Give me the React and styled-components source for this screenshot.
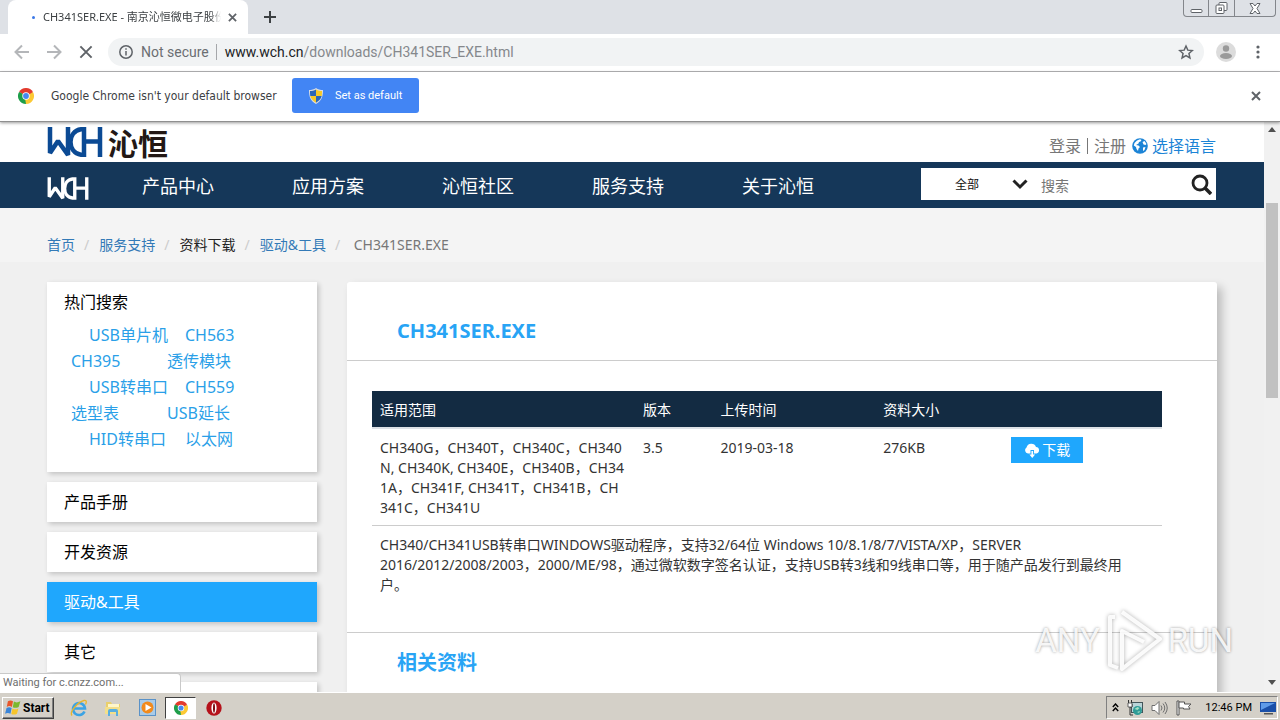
import React from "react";
import styled, { createGlobalStyle } from "styled-components";

const uiFont = `Roboto, "Noto Sans CJK SC", sans-serif`;
const pageFont = `"Noto Sans", "Noto Sans CJK SC", sans-serif`;

const GlobalStyle = createGlobalStyle`
  *, *::before, *::after { box-sizing: border-box; }
  body { margin: 0; font-family: ${pageFont}; color: #333; }
  button, input, select { font-family: inherit; margin: 0; padding: 0; border: 0; background: none; border-radius: 0; outline: none; }
  a { color: inherit; text-decoration: none; }
  h1, h2, p, ul, ol { margin: 0; padding: 0; list-style: none; }
  svg { display: block; flex: none; }
`;

/* ---------- Browser frame ---------- */

const Desktop = styled.div`
  display: flex;
  flex-direction: column;
  height: 100vh;
  overflow: hidden;
`;

const TabStrip = styled.div`
  display: flex;
  align-items: flex-start;
  height: 34px;
  flex: none;
  padding: 0 4px 0 8px;
  background: #dee1e6;
  font-family: ${pageFont};
`;

const Tab = styled.div`
  display: flex;
  align-items: center;
  width: 240px;
  height: 34px;
  padding: 0 5px 0 24px;
  background: #fff;
  border-radius: 8px 8px 0 0;
`;

const Spinner = styled.span`
  width: 3px;
  height: 3px;
  margin-right: 8px;
  border-radius: 50%;
  background: #3b78e7;
`;

const TabTitle = styled.span`
  flex: 1;
  overflow: hidden;
  white-space: nowrap;
  font-size: 11px;
  line-height: 18px;
  color: #3c4043;
  mask-image: linear-gradient(90deg, #000 94%, transparent);
`;

const IconButton = styled.button`
  display: flex;
  align-items: center;
  justify-content: center;
  flex: none;
  width: ${(p) => p.$w || 32}px;
  height: ${(p) => p.$h || 32}px;
  color: ${(p) => p.$color || "#5f6368"};
`;

const WindowControls = styled.div`
  display: flex;
  margin-left: auto;
  height: 17px;
  border: 1px solid #83868b;
  border-top: 0;
  border-radius: 0 0 4px 4px;
  & > button + button { border-left: 1px solid #83868b; }
`;

const Toolbar = styled.div`
  display: flex;
  align-items: center;
  flex: none;
  height: 38px;
  padding: 0 6px 2px;
  background: #fff;
  border-bottom: 1px solid #b6b6b8;
  font-family: ${uiFont};
`;

const Omnibox = styled.div`
  display: flex;
  align-items: center;
  flex: 1;
  height: 28px;
  margin: 0 6px;
  padding: 0 6px 0 11px;
  border-radius: 14px;
  background: #f1f3f4;
  font-size: 14px;
  line-height: 20px;
  color: #6b6e72;
`;

const Security = styled.span`
  margin: 0 8px;
  padding-right: 7px;
  border-right: 1px solid #a5a7aa;
  line-height: 16px;
  white-space: nowrap;
`;

const Url = styled.span`
  flex: 1;
  white-space: nowrap;
  color: #85888c;
  b { font-weight: 400; color: #202124; }
`;

const InfoBar = styled.div`
  position: relative;
  z-index: 2;
  display: flex;
  align-items: center;
  flex: none;
  height: 50px;
  padding: 0 8px 2px 18px;
  background: #fff;
  border-bottom: 1px solid #8f8f8f;
  box-shadow: 0 1px 3px rgba(0, 0, 0, 0.4);
  font-family: ${uiFont};
  font-size: 12px;
  color: #3c4043;
  & > :last-child { margin-left: auto; }
`;

const InfoText = styled.span`
  min-width: 228px;
  margin: 0 13px 0 17px;
  font-family: "DejaVu Sans Condensed", "Noto Sans", sans-serif;
  font-size: 12px;
  white-space: nowrap;
`;

const DefaultButton = styled.button`
  display: flex;
  align-items: center;
  gap: 12px;
  height: 35px;
  width: 127px;
  padding-left: 17px;
  border-radius: 3px;
  background: #4285f4;
  color: #fff;
  font-size: 11px;
  white-space: nowrap;
`;

const Viewport = styled.div`
  position: relative;
  display: flex;
  flex: 1;
  min-height: 0;
  overflow: hidden;
`;

const Page = styled.div`
  flex: 1;
  min-width: 0;
  overflow: hidden;
  background: #f0f0f0;
`;

const ScrollTrack = styled.div`
  display: flex;
  flex-direction: column;
  align-items: center;
  flex: none;
  width: 16px;
  padding: 5px 0 7px;
  background: #f1f1f1;
  color: #505050;
`;

const Thumb = styled.div`
  width: 12px;
  height: 35%;
  margin: 71px 0 auto;
  background: #c1c1c1;
`;

const StatusBubble = styled.div`
  position: absolute;
  left: 0;
  bottom: 0;
  width: 181px;
  height: 19px;
  padding-left: 3px;
  border: 1px solid #c9c9c9;
  border-left: 0;
  border-bottom: 0;
  border-radius: 0 4px 0 0;
  background: #fff;
  font-family: ${uiFont};
  font-size: 11px;
  line-height: 18px;
  color: #6e6e6e;
`;

/* ---------- Site header ---------- */

const TopBar = styled.div`
  display: flex;
  align-items: center;
  justify-content: space-between;
  height: 40px;
  padding: 0 48px 0 47px;
  background: #fff;
`;

const Brand = styled.a`
  display: flex;
  align-items: center;
  gap: 5px;
  color: #231815;
  font-family: "Noto Sans CJK SC", sans-serif;
  font-size: 30px;
  font-weight: 700;
  line-height: 40px;
`;

const Account = styled.div`
  display: flex;
  align-items: center;
  gap: 6px;
  padding-top: 8px;
  font-size: 16px;
  line-height: 24px;
  color: #777;
`;

const Divider = styled.span`
  width: 1px;
  height: 16px;
  background: #777;
`;

const LanguageLink = styled.a`
  display: flex;
  align-items: center;
  gap: 4px;
  color: #1c84d6;
`;

const NavBar = styled.nav`
  display: flex;
  align-items: center;
  height: 46px;
  padding: 0 48px 2px 47px;
  background: #153759;
`;

const HomeLink = styled.a`
  padding-top: 8px;
`;

const NavList = styled.ul`
  display: flex;
  padding-top: 4px;
  margin-left: 53px;
`;

const NavItem = styled.li`
  width: 150px;
  font-size: 18px;
  line-height: 28px;
  color: #fff;
`;

const SearchForm = styled.form`
  display: flex;
  align-items: center;
  width: 295px;
  height: 32px;
  margin-left: auto;
  padding-right: 4px;
  background: #fff;
`;

const SearchScope = styled.div`
  position: relative;
  select {
    width: 112px;
    height: 32px;
    padding-left: 34px;
    appearance: none;
    font-size: 12px;
    color: #111;
  }
  svg { position: absolute; right: 5px; top: 11px; pointer-events: none; }
`;

const SearchInput = styled.input`
  flex: 1;
  min-width: 0;
  height: 32px;
  padding: 2px 0 0 8px;
  font-size: 14px;
  color: #333;
  &::placeholder { color: #757575; opacity: 1; }
`;

const Crumbs = styled.ol`
  display: flex;
  height: 54px;
  padding: 27px 47px 0;
  background: #f4f4f4;
  font-size: 14px;
  line-height: 20px;
`;

const Crumb = styled.li`
  color: ${(p) => p.$color || "#337ab7"};
  &:not(:first-child)::before { content: "/"; padding: 0 10px 0 9px; color: #ccc; }
`;

/* ---------- Page body ---------- */

const Columns = styled.div`
  display: flex;
  align-items: flex-start;
  gap: 30px;
  padding: 20px 47px 0;
`;

const Sidebar = styled.aside`
  display: flex;
  flex-direction: column;
  gap: 10px;
  flex: none;
  width: 270px;
`;

const SideLink = styled.a`
  display: block;
  height: 40px;
  padding-left: 17px;
  background: ${(p) => (p.$active ? "#1fa7fd" : "#fff")};
  color: ${(p) => (p.$active ? "#fff" : "#000")};
  box-shadow: 2px 2px 5px rgba(0, 0, 0, 0.2);
  font-size: 16px;
  line-height: 40px;
`;

const HotCard = styled.section`
  height: 190px;
  background: #fff;
  box-shadow: 2px 2px 5px rgba(0, 0, 0, 0.2);
  font-size: 16px;
  h2 { padding-left: 17px; font-size: 16px; font-weight: 400; line-height: 40px; color: #000; }
`;

const HotRow = styled.div`
  display: grid;
  grid-template-columns: 96px 96px;
  padding-left: ${(p) => (p.$indent ? 42 : 24)}px;
  line-height: 26px;
  color: #2a9fe8;
  white-space: nowrap;
`;

const Card = styled.main`
  flex: 1;
  min-width: 0;
  height: 640px;
  border-radius: 3px;
  background: #fff;
  box-shadow: 5px 5px 10px rgba(0, 0, 0, 0.22);
`;

const CardTitle = styled.h1`
  padding: 34px 50px 15px;
  font-size: 20px;
  font-weight: 700;
  line-height: 29px;
  color: #28a4f5;
  border-bottom: 1px solid #ccc;
`;

const SectionTitle = styled.h2`
  margin-top: 30px;
  padding: 15px 50px;
  border-top: 1px solid #ccc;
  font-size: 20px;
  font-weight: 700;
  line-height: 29px;
  color: #28a4f5;
`;

const TableWrap = styled.div`
  padding: 30px 55px 0 25px;
`;

const DataTable = styled.table`
  width: 100%;
  table-layout: fixed;
  border-collapse: separate;
  border-spacing: 0;
  font-size: 14px;
  line-height: 20px;
  th { height: 38px; padding: 2px 8px 0; text-align: left; font-weight: 400; color: #fff; background: #132b42; border-bottom: 2px solid #dde1e6; }
  td { padding: 9px 8px 7px; vertical-align: top; white-space: nowrap; color: #333; }
  td:has(button) { padding-top: 8px; }
  tbody tr:first-child td { border-bottom: 1px solid #ccc; }
`;

const Download = styled.button`
  display: flex;
  align-items: center;
  justify-content: center;
  gap: 2px;
  width: 72px;
  height: 26px;
  background: #1fa7fd;
  color: #fff;
  font-size: 14px;
  line-height: 20px;
`;

const Watermark = styled.div`
  position: absolute;
  right: 47px;
  bottom: 18px;
  display: flex;
  align-items: center;
  gap: 6px;
  color: rgba(255, 255, 255, 0.9);
  font-family: Roboto, sans-serif;
  font-size: 33px;
  line-height: 66px;
  text-shadow: 0 0 3px rgba(0, 0, 0, 0.4);
  pointer-events: none;
  svg { filter: drop-shadow(0 0 2px rgba(0, 0, 0, 0.35)); }
`;

/* ---------- Taskbar ---------- */

const Taskbar = styled.footer`
  display: flex;
  align-items: center;
  flex: none;
  height: 28px;
  padding: 2px 2px 0 2px;
  background: #d4d0c8;
  border-top: 1px solid #fff;
  font-family: ${uiFont};
`;

const StartButton = styled.button`
  display: flex;
  align-items: center;
  gap: 1px;
  width: 52px;
  height: 22px;
  padding-left: 1px;
  margin-right: 8px;
  border: 1px solid;
  border-color: #fff #404040 #404040 #fff;
  box-shadow: inset -1px -1px 0 #808080;
  font-size: 12px;
  font-weight: 700;
  color: #000;
`;

const TaskButton = styled.button`
  display: flex;
  align-items: center;
  justify-content: center;
  width: ${(p) => (p.$active ? 31 : 34)}px;
  height: 22px;
  background: ${(p) => (p.$active ? "#fff" : "transparent")};
  border: ${(p) => (p.$active ? "1px solid" : "0")};
  border-color: #404040 #fff #fff #404040;
  margin: 0 ${(p) => (p.$active ? 1 : 0)}px;
`;

const Tray = styled.div`
  display: flex;
  align-items: center;
  gap: 8px;
  height: 23px;
  margin-left: auto;
  padding: 0 1px 0 5px;
  border: 1px solid;
  border-color: #808080 #fff #fff #808080;
  font-size: 11px;
  color: #000;
  white-space: nowrap;
`;

const Clock = styled.span`
  margin-left: 5px;
`;

/* ---------- Icons ---------- */

const Cross = ({ size = 10, w = 2 }) => (
  <svg width={size} height={size} viewBox="0 0 10 10" stroke="currentColor" strokeWidth={w}>
    <path d="M1 1l8 8M9 1l-8 8" />
  </svg>
);

const Arrow = ({ flip }) => (
  <svg width="16" height="16" viewBox="0 0 16 16" fill="none" stroke="#b4b6b9" strokeWidth="2">
    <path d={flip ? "M1 8h13M8 1.500l6.500 6.500L8 14.500" : "M15 8H2M8 1.500L1.500 8 8 14.500"} />
  </svg>
);

const ChromeLogo = ({ size = 16 }) => (
  <svg width={size} height={size} viewBox="0 0 16 16">
    <path d="M8 8L1.070 4A8 8 0 0 1 14.930 4z" fill="#e33b2e" />
    <path d="M8 8L14.930 4A8 8 0 0 1 8 16z" fill="#fcc934" />
    <path d="M8 8v8A8 8 0 0 1 1.070 4z" fill="#1e9e4a" />
    <path d="M8 4.300h6.930L8 8z" fill="#e33b2e" />
    <path d="M11.200 9.850L8 16l-1-6z" fill="#fcc934" />
    <path d="M4.800 9.850L1.070 4 8 8z" fill="#1e9e4a" />
    <circle cx="8" cy="8" r="3.700" fill="#fff" />
    <circle cx="8" cy="8" r="2.900" fill="#4688f1" />
  </svg>
);

const WchMark = ({ width, height, color }) => (
  <svg width={width} height={height} viewBox="0 0 56 30" fill="none" stroke={color} strokeWidth="4.500" aria-label="WCH">
    <path d="M3 0v26L11 14l10 14V0" strokeLinejoin="bevel" />
    <path d="M37 0v30M37 2.300h-3C20 4 20 26 34 27.700h3M37 14.500h16M53 0v30" />
  </svg>
);

const Shield = () => (
  <svg width="14" height="16" viewBox="0 0 14 16">
    <path d="M7 0c2 1.500 4.500 2 7 2 0 7-1.500 11-7 14C1.500 13 0 9 0 2c2.500 0 5-.5 7-2z" fill="#d9dde3" />
    <path d="M7 1.500V8H1.300C1 6.500 1 5 1 3c2 0 4-.4 6-1.500z" fill="#2a66b8" />
    <path d="M7 1.500V8h5.700c.3-1.500.3-3 .3-5-2 0-4-.4-6-1.500z" fill="#f6c928" />
    <path d="M7 8v6.700C4 13 2 11 1.300 8z" fill="#f6c928" />
    <path d="M7 8v6.700C10 13 12 11 12.700 8z" fill="#2a66b8" />
  </svg>
);

const Globe = () => (
  <svg width="16" height="16" viewBox="0 0 16 16">
    <circle cx="8" cy="8" r="7.800" fill="#1c84d6" />
    <path d="M5 2.500L8 1.300l1.500.7-1 1.500-1.500.5-.5 1.500L4 7l2.500.5 1.500 1.500-1.500 1.500-.5 2.500-1.500-2L4 9 1.800 7.500 2.500 5z" fill="#fff" />
    <path d="M10.500 4l2-1 2 3-1 1-2-.5zM11 9.500l2.500-.5-1 3-1.500 1z" fill="#fff" />
  </svg>
);

const WindowsFlag = () => (
  <svg width="18" height="17" viewBox="0 0 15 15">
    <path d="M3 2c1.500-1 3-1 4.500 0L6.500 7C5 6 3.500 6 2 7z" fill="#e8562a" />
    <path d="M8.300 2.300c1.500 1 3.500 1 5.700-.3l-1.500 5c-2 1-3.500 1-5.200.2z" fill="#7cb82f" />
    <path d="M1.800 8c1.500-1 3-1 4.500 0l-1 5C3.800 12 2 12 .500 13z" fill="#3a85d8" />
    <path d="M7 8.300c1.500 1 3.500 1 5.300 0L11 13c-1.800 1-3.500 1-5 .2z" fill="#f7c52b" />
  </svg>
);

const IeIcon = () => (
  <svg width="18" height="18" viewBox="0 0 18 18" fill="none">
    <path d="M14.500 12.500A6 6 0 1 1 15 9.500H4" stroke="#3ba3e4" strokeWidth="2.600" />
    <path d="M2 16.500C-1 13 8 3 14 1.500c3-.6 2.500 2 1.500 4" stroke="#e8b52c" strokeWidth="1.300" />
  </svg>
);

const FolderIcon = () => (
  <svg width="18" height="18" viewBox="0 0 18 18">
    <path d="M2 3h5l1 2h8v9H2z" fill="#e9cf6c" />
    <path d="M4 5h11v4H4z" fill="#fff6c9" />
    <path d="M1 8h15v7H1z" fill="#f3df8a" />
    <path d="M4 17v-5q0-2 2-2h6q2 0 2 2v5h-2v-4H6v4z" fill="#58aee0" />
  </svg>
);

const PlayerIcon = () => (
  <svg width="17" height="17" viewBox="0 0 17 17">
    <rect x=".5" y=".5" width="16" height="16" fill="#a9cbe8" stroke="#5a92c8" />
    <circle cx="8.500" cy="8.500" r="6" fill="#f28a1c" />
    <path d="M6.500 5l6 3.500-6 3.500z" fill="#fff" />
  </svg>
);

const OperaIcon = () => (
  <svg width="16" height="16" viewBox="0 0 16 16">
    <circle cx="8" cy="8" r="7.700" fill="#b5121b" />
    <ellipse cx="8" cy="8" rx="2.600" ry="5.500" fill="#fff" />
    <ellipse cx="8" cy="8" rx="1" ry="4.800" fill="#7d0c12" />
  </svg>
);

const NetworkIcon = () => (
  <svg width="16" height="16" viewBox="0 0 16 16">
    <rect x="4.500" y="2.500" width="11" height="10" fill="#b9d4d8" stroke="#43555a" />
    <path d="M1.500 0v4M4.500 0v4M1 4h4v3H3v8h3" fill="none" stroke="#333" />
    <path d="M1 3h4v4H1z" fill="#fff" stroke="#444" strokeWidth=".8" />
    <circle cx="10.500" cy="10.500" r="4.500" fill="#2f9c97" />
    <path d="M7.500 9l3-2 2 1-2 2zM10 12l3-1-1 2z" fill="#a7e0c4" />
  </svg>
);

const SpeakerIcon = () => (
  <svg width="17" height="16" viewBox="0 0 17 16" fill="none" stroke="#6e6e6e">
    <path d="M1 5.500h3l4-4v13l-4-4H1z" fill="#fff" />
    <path d="M10 5.500q2 2.500 0 5M12 3.500q3.500 4.500 0 9M14 2q4.500 6 0 12" />
  </svg>
);

const FlagIcon = () => (
  <svg width="16" height="16" viewBox="0 0 16 16" fill="#fff" stroke="#555">
    <path d="M1 1h2v14H1z" />
    <path d="M3 2h5.500v2H15l-2.500 2.500L14 9H7.500V8H3z" />
  </svg>
);

const DisplayIcon = () => (
  <svg width="16" height="14" viewBox="0 0 16 14">
    <path d="M0 1h16v10H0z" fill="#1a4fa8" />
    <path d="M1 2h14L1 9z" fill="#5f9be8" />
    <path d="M4 12h9v1.500H4z" fill="#555" />
  </svg>
);

/* ---------- Data ---------- */

const navItems = ["产品中心", "应用方案", "沁恒社区", "服务支持", "关于沁恒"];

const hotRows = [
  ["USB单片机", "CH563"],
  ["CH395", "透传模块"],
  ["USB转串口", "CH559"],
  ["选型表", "USB延长"],
  ["HID转串口", "以太网"],
];

const sideLinks = ["产品手册", "开发资源", "驱动&工具", "其它"];

export default function App() {
  return (
    <Desktop lang="zh-CN">
      <GlobalStyle />
      <TabStrip>
        <Tab>
          <Spinner />
          <TabTitle>CH341SER.EXE - 南京沁恒微电子股份</TabTitle>
          <IconButton $w={22} $h={22} aria-label="Close tab"><Cross size={9} /></IconButton>
        </Tab>
        <IconButton $w={44} $h={34} $color="#3c4043" aria-label="New tab">
          <svg width="12" height="12" viewBox="0 0 12 12" stroke="currentColor" strokeWidth="2"><path d="M6 0v12M0 6h12" /></svg>
        </IconButton>
        <WindowControls>
          <IconButton $w={24} $h={16} aria-label="Minimize">
            <svg width="13" height="12" viewBox="0 0 13 12" fill="#fff" stroke="currentColor"><rect x="1" y="7.500" width="11" height="3" rx="1" /></svg>
          </IconButton>
          <IconButton $w={26} $h={16} aria-label="Restore">
            <svg width="13" height="12" viewBox="0 0 13 12" fill="#fff" stroke="currentColor">
              <rect x="4" y=".5" width="8" height="8" rx="1" /><rect x="1" y="3" width="8" height="8.500" rx="1" /><rect x="4" y="6" width="2.500" height="2.500" />
            </svg>
          </IconButton>
          <IconButton $w={41} $h={16} aria-label="Close window">
            <svg width="12" height="11" viewBox="0 0 12 11" fill="#fff" stroke="currentColor"><path d="M1 .5h3l2 2.500 2-2.500h3L8 5.500l3 5H8L6 8l-2 2.500H1l3-5z" /></svg>
          </IconButton>
        </WindowControls>
      </TabStrip>

      <Toolbar>
        <IconButton aria-label="Back"><Arrow /></IconButton>
        <IconButton aria-label="Forward"><Arrow flip /></IconButton>
        <IconButton aria-label="Stop"><Cross size={14} w={1.4} /></IconButton>
        <Omnibox>
          <svg width="14" height="14" viewBox="0 0 14 14" fill="none" stroke="#5f6368" strokeWidth="1.500">
            <circle cx="7" cy="7" r="6.200" /><path d="M7 6v4.500M7 3.300v1.500" />
          </svg>
          <Security>Not secure</Security>
          <Url><b>www.wch.cn</b>/downloads/CH341SER_EXE.html</Url>
          <IconButton $w={24} $h={24} aria-label="Bookmark this page">
            <svg width="16" height="16" viewBox="0 0 24 24" fill="none" stroke="currentColor" strokeWidth="2.200">
              <path d="M12 3l2.700 6.200 6.800.6-5.100 4.500 1.500 6.600L12 17.400l-5.900 3.500 1.500-6.600-5.100-4.500 6.800-.6z" />
            </svg>
          </IconButton>
        </Omnibox>
        <IconButton aria-label="Profile">
          <svg width="20" height="20" viewBox="0 0 20 20">
            <circle cx="10" cy="10" r="10" fill="#dcdcdc" /><circle cx="10" cy="6.500" r="3.200" fill="#9a9a9a" /><ellipse cx="10" cy="14" rx="6" ry="3" fill="#9a9a9a" />
          </svg>
        </IconButton>
        <IconButton aria-label="Menu">
          <svg width="4" height="14" viewBox="0 0 4 14" fill="currentColor"><circle cx="2" cy="2" r="1.600" /><circle cx="2" cy="7" r="1.600" /><circle cx="2" cy="12" r="1.600" /></svg>
        </IconButton>
      </Toolbar>

      <InfoBar>
        <ChromeLogo />
        <InfoText>Google Chrome isn't your default browser</InfoText>
        <DefaultButton><Shield />Set as default</DefaultButton>
        <IconButton $h={30} aria-label="Dismiss"><Cross /></IconButton>
      </InfoBar>

      <Viewport>
        <Page>
          <TopBar>
            <Brand href="#"><WchMark width={56} height={30} color="#0b4a94" />沁恒</Brand>
            <Account>
              <a href="#">登录</a><Divider /><a href="#">注册</a>
              <LanguageLink href="#"><Globe />选择语言</LanguageLink>
            </Account>
          </TopBar>
          <NavBar>
            <HomeLink href="#" aria-label="WCH home"><WchMark width={42} height={23} color="#fff" /></HomeLink>
            <NavList>
              {navItems.map((item) => <NavItem key={item}><a href="#">{item}</a></NavItem>)}
            </NavList>
            <SearchForm>
              <SearchScope>
                <select aria-label="搜索范围" defaultValue="all"><option value="all">全部</option></select>
                <svg width="16" height="11" viewBox="0 0 16 11" fill="none" stroke="#222" strokeWidth="3"><path d="M1.500 1.500L8 8l6.500-6.500" /></svg>
              </SearchScope>
              <SearchInput aria-label="搜索" placeholder="搜索" />
              <IconButton $w={22} $color="#222" type="button" aria-label="提交搜索">
                <svg width="21" height="21" viewBox="0 0 21 21" fill="none" stroke="currentColor" strokeWidth="2.800"><circle cx="9" cy="9" r="7" /><path d="M14 14l6 6" strokeWidth="3.500" /></svg>
              </IconButton>
            </SearchForm>
          </NavBar>
          <Crumbs>
            <Crumb><a href="#">首页</a></Crumb>
            <Crumb><a href="#">服务支持</a></Crumb>
            <Crumb $color="#222">资料下载</Crumb>
            <Crumb><a href="#">驱动&amp;工具</a></Crumb>
            <Crumb $color="#777">&nbsp;CH341SER.EXE</Crumb>
          </Crumbs>

          <Columns>
            <Sidebar>
              <HotCard>
                <h2>热门搜索</h2>
                {hotRows.map((row, i) => (
                  <HotRow key={row[0]} $indent={i % 2 === 0}>
                    {row.map((tag) => <a key={tag} href="#">{tag}</a>)}
                  </HotRow>
                ))}
              </HotCard>
              {sideLinks.map((label) => (
                <SideLink key={label} href="#" $active={label === "驱动&工具"}>{label}</SideLink>
              ))}
              <SideLink as="div" />
            </Sidebar>

            <Card>
              <CardTitle>CH341SER.EXE</CardTitle>
              <TableWrap>
                <DataTable>
                  <colgroup>
                    <col style={{ width: "33.3%" }} />
                    <col style={{ width: "9.8%" }} />
                    <col style={{ width: "20.6%" }} />
                    <col style={{ width: "16.2%" }} />
                    <col />
                  </colgroup>
                  <thead>
                    <tr><th>适用范围</th><th>版本</th><th>上传时间</th><th>资料大小</th><th aria-label="下载" /></tr>
                  </thead>
                  <tbody>
                    <tr>
                      <td>
                        CH340G，CH340T，CH340C，CH340<br />
                        N, CH340K, CH340E，CH340B，CH34<br />
                        1A，CH341F, CH341T，CH341B，CH<br />
                        341C，CH341U
                      </td>
                      <td>3.5</td>
                      <td>2019-03-18</td>
                      <td>276KB</td>
                      <td>
                        <Download>
                          <svg width="16" height="15" viewBox="0 0 16 15" fill="#fff">
                            <path d="M4 10.500A3.300 3.300 0 0 1 2.500 4.500 5 5 0 0 1 12 4a3.300 3.300 0 0 1 .5 6.500H10V7H6.500v3.500z" />
                            <path d="M7.400 8h1.700v3.500h2L8.250 15 5.400 11.500h2z" />
                          </svg>
                          下载
                        </Download>
                      </td>
                    </tr>
                    <tr>
                      <td colSpan={5}>
                        CH340/CH341USB转串口WINDOWS驱动程序，支持32/64位 Windows 10/8.1/8/7/VISTA/XP，SERVER<br />
                        2016/2012/2008/2003，2000/ME/98，通过微软数字签名认证，支持USB转3线和9线串口等，用于随产品发行到最终用<br />
                        户。
                      </td>
                    </tr>
                  </tbody>
                </DataTable>
              </TableWrap>
              <SectionTitle>相关资料</SectionTitle>
            </Card>
          </Columns>
        </Page>
        <ScrollTrack>
          <svg width="8" height="5" viewBox="0 0 8 5" fill="currentColor"><path d="M0 5l4-5 4 5z" /></svg>
          <Thumb />
          <svg width="8" height="5" viewBox="0 0 8 5" fill="currentColor"><path d="M0 0l4 5 4-5z" /></svg>
        </ScrollTrack>
        <StatusBubble>Waiting for c.cnzz.com...</StatusBubble>
        <Watermark>
          <span>ANY</span>
          <svg width="56" height="64" viewBox="0 0 56 64" fill="none" stroke="#fff" strokeOpacity=".9" strokeWidth="4" strokeLinejoin="round">
            <path d="M16 3l38 27L16 60V22l22 11" /><path d="M9 8H4v48l8 3" />
          </svg>
          <span>RUN</span>
        </Watermark>
      </Viewport>

      <Taskbar>
        <StartButton><WindowsFlag />Start</StartButton>
        <TaskButton aria-label="Internet Explorer"><IeIcon /></TaskButton>
        <TaskButton aria-label="Explorer"><FolderIcon /></TaskButton>
        <TaskButton aria-label="Media Player"><PlayerIcon /></TaskButton>
        <TaskButton $active aria-label="Chrome"><ChromeLogo size={14} /></TaskButton>
        <TaskButton aria-label="Opera"><OperaIcon /></TaskButton>
        <Tray>
          <svg width="7" height="9" viewBox="0 0 7 9" fill="none" stroke="#000" strokeWidth="1.400"><path d="M.8 4l2.700-3 2.700 3M.8 8l2.700-3 2.700 3" /></svg>
          <NetworkIcon />
          <SpeakerIcon />
          <FlagIcon />
          <Clock>12:46 PM</Clock>
          <DisplayIcon />
        </Tray>
      </Taskbar>
    </Desktop>
  );
}
